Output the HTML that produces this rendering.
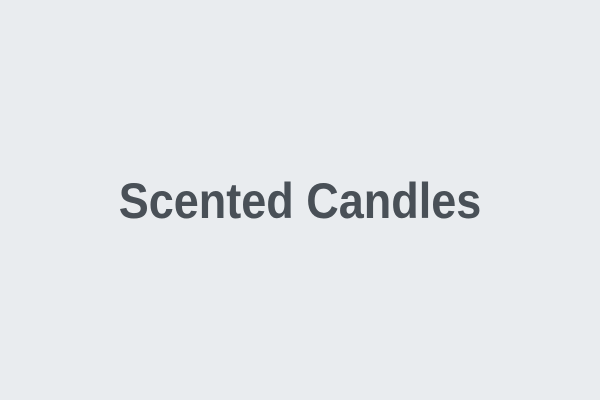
<!DOCTYPE html>
<html><head><style>
html,body{margin:0;padding:0}
body{width:600px;height:400px;background:#e9ecef;position:relative;overflow:hidden}
.t{position:absolute;left:0;width:600px;top:172px;text-align:center;font-family:"Liberation Sans",sans-serif;font-weight:bold;font-size:50px;line-height:58px;color:#495057;transform:scaleX(0.9);transform-origin:300px 0}
</style></head><body>
<div class="t">Scented Candles</div>
</body></html>
